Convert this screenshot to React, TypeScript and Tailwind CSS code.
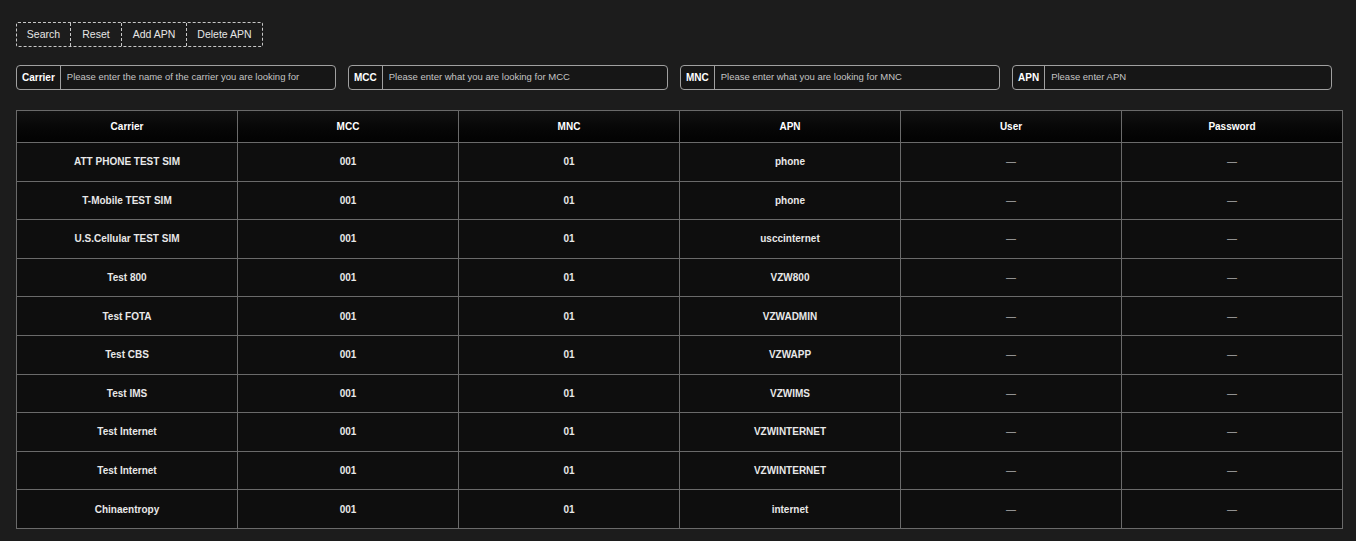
import React from "react";

const rows = [
  ["ATT PHONE TEST SIM", "001", "01", "phone"],
  ["T-Mobile TEST SIM", "001", "01", "phone"],
  ["U.S.Cellular TEST SIM", "001", "01", "usccinternet"],
  ["Test 800", "001", "01", "VZW800"],
  ["Test FOTA", "001", "01", "VZWADMIN"],
  ["Test CBS", "001", "01", "VZWAPP"],
  ["Test IMS", "001", "01", "VZWIMS"],
  ["Test Internet", "001", "01", "VZWINTERNET"],
  ["Test Internet", "001", "01", "VZWINTERNET"],
  ["Chinaentropy", "001", "01", "internet"],
];

const inputs = [
  ["Carrier", "Please enter the name of the carrier you are looking for"],
  ["MCC", "Please enter what you are looking for MCC"],
  ["MNC", "Please enter what you are looking for MNC"],
  ["APN", "Please enter APN"],
];

const buttons: [string, string][] = [
  ["Search", "w-[54px]"],
  ["Reset", "w-[51px]"],
  ["Add APN", "w-[65px]"],
  ["Delete APN", "w-[75px]"],
];

export default function App() {
  return (
    <div className="bg-white">
      <div
        className="h-[541px] bg-[#1c1c1c] pl-[16px] pt-[22px] text-[10px] text-[#e6e6e6]"
        style={{ fontFamily: '"Liberation Sans", Arial, sans-serif' }}
      >
        <div className="flex h-[25px] w-fit rounded-[2px] border border-dashed border-[#c8c8c8]">
          {buttons.map(([b, w], i) => (
            <button
              key={b}
              className={
                w +
                " flex items-center justify-center text-[10.5px] text-[#e6e6e6] " +
                (i < 3 ? "border-r border-dashed border-[#c8c8c8]" : "")
              }
            >
              {b}
            </button>
          ))}
        </div>

        <div className="mt-[18px] grid w-[1316px] grid-cols-4 gap-[12px]">
          {inputs.map(([label, ph]) => (
            <div
              key={label}
              className="flex h-[25px] items-stretch rounded-[4px] border border-[#a0a0a0] bg-[#161616]"
            >
              <div className="flex items-center border-r border-[#a0a0a0] px-[5px] text-[10px] font-bold text-white">
                {label}
              </div>
              <div className="flex items-center whitespace-nowrap pl-[6px] text-[9.5px] text-[#c4c4c4]">
                {ph}
              </div>
            </div>
          ))}
        </div>

        <table className="mt-[20px] w-[1327px] table-fixed border-collapse">
          <thead>
            <tr className="h-[32px] bg-gradient-to-b from-[#111111] to-[#020202]">
              {["Carrier", "MCC", "MNC", "APN", "User", "Password"].map((h) => (
                <th
                  key={h}
                  className="border border-[#6a6a6a] text-center text-[10px] font-bold text-white"
                >
                  {h}
                </th>
              ))}
            </tr>
          </thead>
          <tbody className="bg-[#0e0e0e]">
            {rows.map((r, i) => (
              <tr key={i} className="h-[38.6px]">
                {r.map((c, j) => (
                  <td
                    key={j}
                    className="border border-[#6a6a6a] text-center text-[10px] font-bold text-[#e8e8e8]"
                  >
                    {c}
                  </td>
                ))}
                <td className="border border-[#6a6a6a] text-center text-[10px] text-[#b0b0b0]">—</td>
                <td className="border border-[#6a6a6a] text-center text-[10px] text-[#b0b0b0]">—</td>
              </tr>
            ))}
          </tbody>
        </table>
      </div>
    </div>
  );
}
